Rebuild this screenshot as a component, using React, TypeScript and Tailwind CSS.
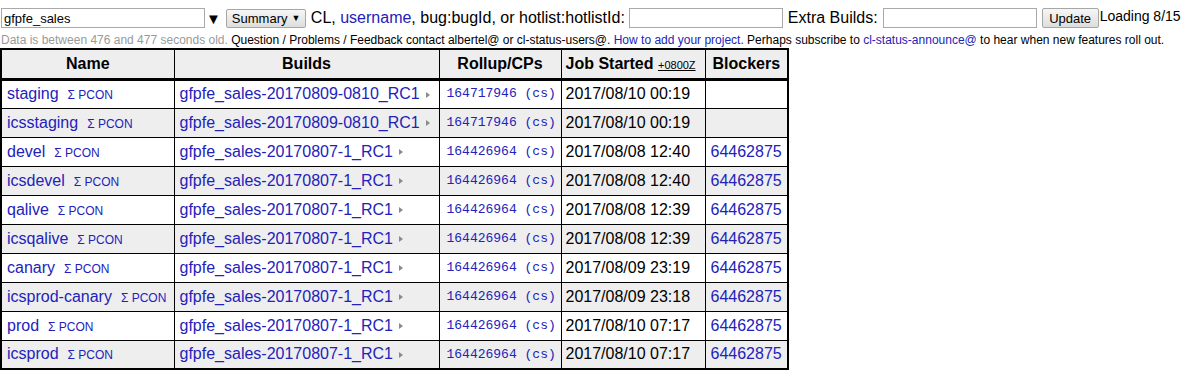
import React from "react";

const rows = [
  { name: "staging", build: "gfpfe_sales-20170809-0810_RC1", cl: "164717946", started: "2017/08/10 00:19", blocker: "" },
  { name: "icsstaging", build: "gfpfe_sales-20170809-0810_RC1", cl: "164717946", started: "2017/08/10 00:19", blocker: "" },
  { name: "devel", build: "gfpfe_sales-20170807-1_RC1", cl: "164426964", started: "2017/08/08 12:40", blocker: "64462875" },
  { name: "icsdevel", build: "gfpfe_sales-20170807-1_RC1", cl: "164426964", started: "2017/08/08 12:40", blocker: "64462875" },
  { name: "qalive", build: "gfpfe_sales-20170807-1_RC1", cl: "164426964", started: "2017/08/08 12:39", blocker: "64462875" },
  { name: "icsqalive", build: "gfpfe_sales-20170807-1_RC1", cl: "164426964", started: "2017/08/08 12:39", blocker: "64462875" },
  { name: "canary", build: "gfpfe_sales-20170807-1_RC1", cl: "164426964", started: "2017/08/09 23:19", blocker: "64462875" },
  { name: "icsprod-canary", build: "gfpfe_sales-20170807-1_RC1", cl: "164426964", started: "2017/08/09 23:18", blocker: "64462875" },
  { name: "prod", build: "gfpfe_sales-20170807-1_RC1", cl: "164426964", started: "2017/08/10 07:17", blocker: "64462875" },
  { name: "icsprod", build: "gfpfe_sales-20170807-1_RC1", cl: "164426964", started: "2017/08/10 07:17", blocker: "64462875" },
];

const link = "text-[#2222bb]";

function Caret() {
  return (
    <svg width="6" height="8" viewBox="0 0 6 8" className="inline-block ml-[5px] align-middle">
      <path d="M1 1 L5 4 L1 7 Z" fill="#8a8a8a" />
    </svg>
  );
}

export default function App() {
  return (
    <div className="bg-white text-black font-['Liberation_Sans',Arial,sans-serif] w-[1199px] h-[380px] overflow-hidden">
      <div className="flex items-center h-[20px] mt-[8px] text-[16px] leading-none whitespace-nowrap">
        <div className="ml-[1px] w-[204px] h-[20px] border border-[#a9a9a9] flex items-center pl-[2px] text-[13px]">gfpfe_sales</div>
        <span className="ml-[1px] text-[15px]">▼</span>
        <div className="ml-[5px] h-[19px] w-[80px] border border-[#a6a6a6] rounded-[2px] bg-gradient-to-b from-[#f6f6f6] to-[#dedede] flex items-center pl-[5px] text-[13px]">
          Summary <span className="ml-[4px] text-[9px]">▼</span>
        </div>
        <span className="ml-[5px]">CL, <span className={link}>username</span>, bug:bugId, or hotlist:hotlistId:</span>
        <div className="ml-[4px] w-[154px] h-[20px] border border-[#a9a9a9]" />
        <span className="ml-[5px]">Extra Builds:</span>
        <div className="ml-[5px] w-[154px] h-[20px] border border-[#a9a9a9]" />
        <div className="ml-[5px] h-[20px] w-[57px] border border-[#a6a6a6] rounded-[2px] bg-gradient-to-b from-[#f6f6f6] to-[#dedede] flex items-center justify-center text-[13px]">Update</div>
        <span className="ml-[1px] -mt-[5px] text-[14px]">Loading 8/15</span>
      </div>
      <div className="mt-[5px] ml-[1px] text-[12px] leading-[14px] whitespace-nowrap">
        <span className="text-[#999]">Data is between 476 and 477 seconds old.</span>{" "}
        Question / Problems / Feedback contact albertel@ or cl-status-users@.{" "}
        <span className={link}>How to add your project.</span> Perhaps subscribe to{" "}
        <span className={link}>cl-status-announce@</span> to hear when new features roll out.
      </div>
      <table className="mt-[1px] border-collapse border-2 border-black table-fixed w-[788px]">
        <colgroup>
          <col className="w-[173px]" />
          <col className="w-[265px]" />
          <col className="w-[122px]" />
          <col className="w-[144px]" />
          <col className="w-[83px]" />
        </colgroup>
        <thead>
          <tr className="bg-[#eeeeee] h-[30px] border-b-[3px] border-black text-[16px] font-bold">
            <th className="border border-black">Name</th>
            <th className="border border-black">Builds</th>
            <th className="border border-black">Rollup/CPs</th>
            <th className="border border-black text-left pl-[4px] whitespace-nowrap">
              Job Started <span className="text-[11px] font-normal underline">+0800Z</span>
            </th>
            <th className="border border-black">Blockers</th>
          </tr>
        </thead>
        <tbody>
          {rows.map((r, i) => (
            <tr key={r.name} className={`h-[29px] ${i % 2 === 1 ? "bg-[#eeeeee]" : "bg-white"}`}>
              <td className="border border-black pl-[5px] whitespace-nowrap">
                <span className={`${link} text-[16px]`}>{r.name}</span>
                <span className={`${link} text-[12px] ml-[9px]`}>Σ PCON</span>
              </td>
              <td className="border border-black pl-[5px] whitespace-nowrap">
                <span className={`${link} text-[16px]`}>{r.build}</span>
                <Caret />
              </td>
              <td className="border border-black pl-[7px] whitespace-nowrap font-['Liberation_Mono',monospace] text-[13px]">
                <span className={link}>{r.cl}</span> <span className={link}>(cs)</span>
              </td>
              <td className="border border-black pl-[4px] whitespace-nowrap text-[16px]">{r.started}</td>
              <td className="border border-black pl-[5px] text-[16px]">
                <span className={link}>{r.blocker}</span>
              </td>
            </tr>
          ))}
        </tbody>
      </table>
    </div>
  );
}
